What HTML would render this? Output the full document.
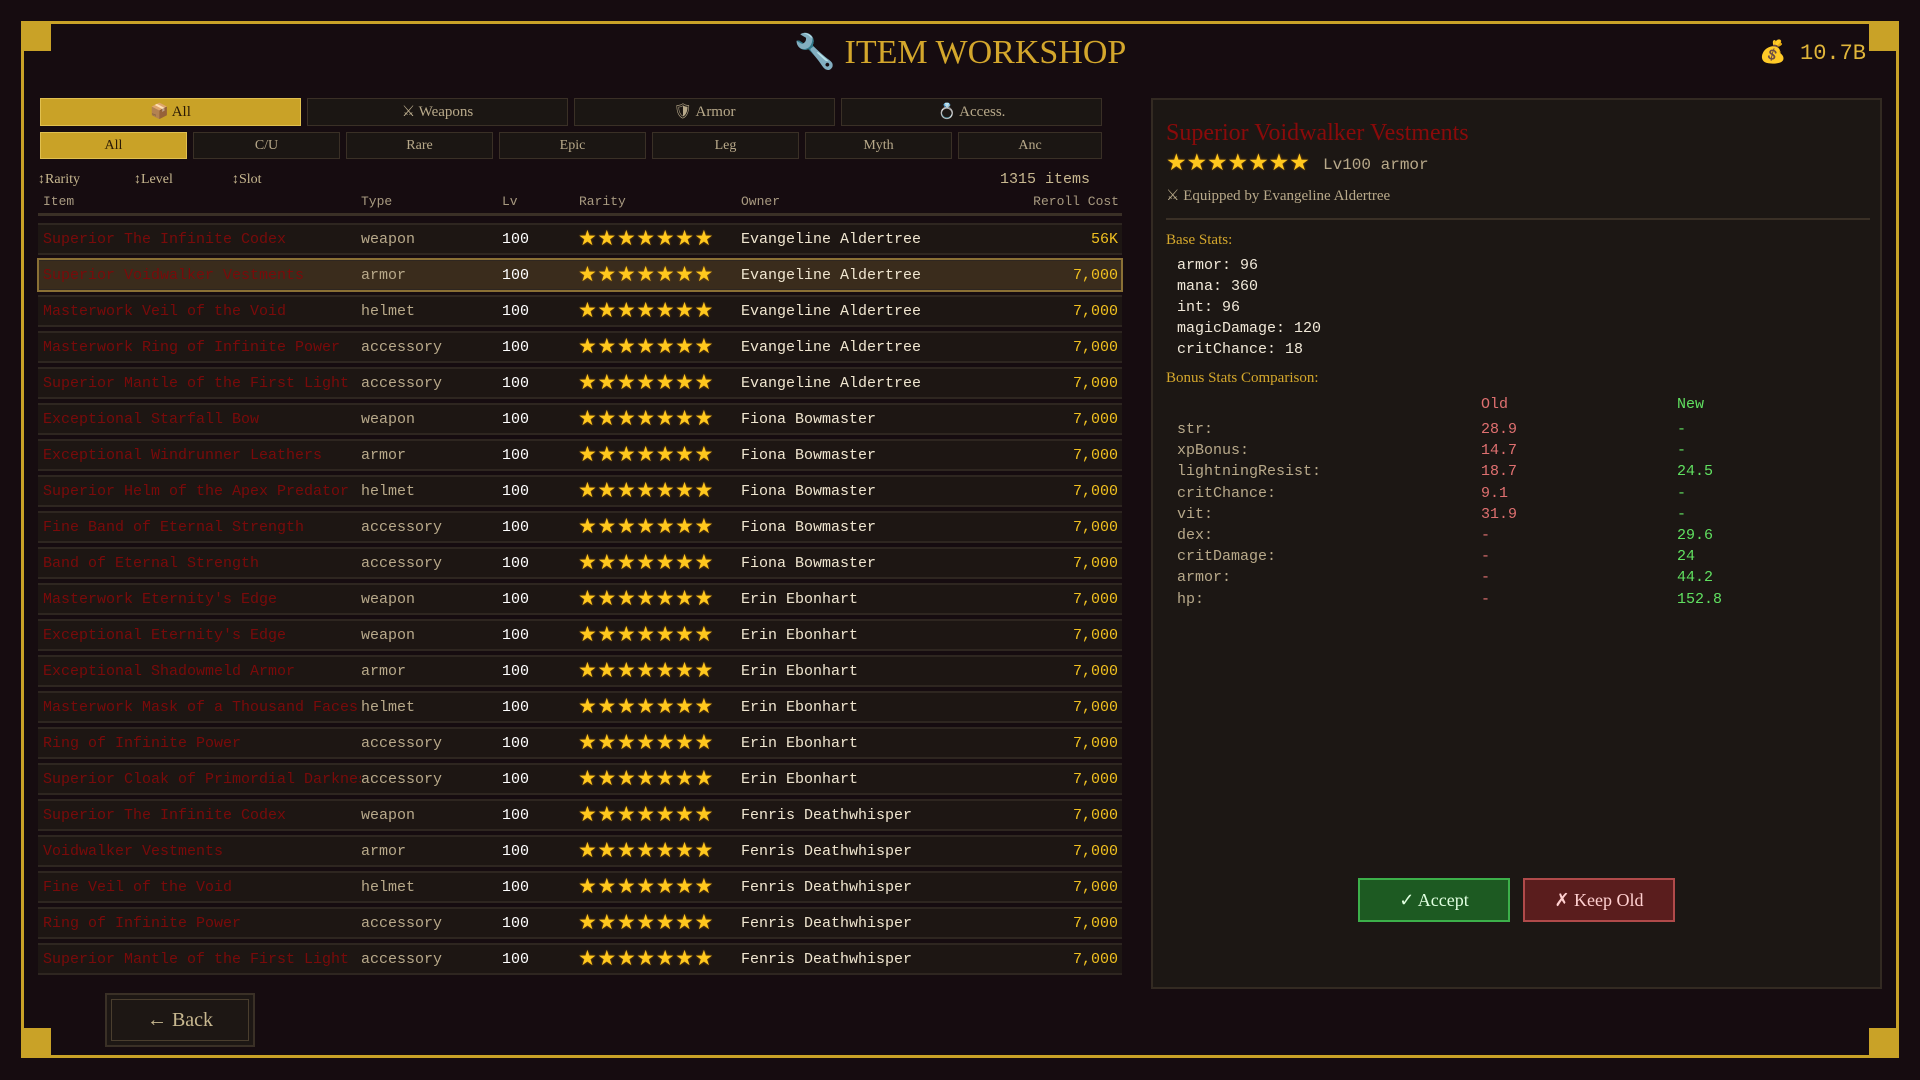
<!DOCTYPE html>
<html><head><meta charset="utf-8"><style>
*{margin:0;padding:0;box-sizing:border-box}
body{width:1920px;height:1080px;background:#160c10;position:relative;overflow:hidden;font-family:"Liberation Mono",monospace;color:#e8dcc0}
.abs{position:absolute}
.frame{left:21px;top:21px;width:1878px;height:1037px;border:3px solid #c9a227}
.corner{width:30px;height:30px;background:#c9a227}
.title{left:0;width:1920px;top:32px;text-align:center;font:34px "Liberation Serif",serif;color:#d4a72c}
.gold{right:54px;top:40px;font-size:22px;color:#e0b53a}
.tab{height:28px;border:1px solid #3a3026;background:#1b1613;color:#b8a98a;font:15px "Liberation Serif",serif;text-align:center;line-height:26px}
.tab.on{background:#c9a227;color:#2a1a05;border-color:#e0c050}
.rt{height:27px;line-height:25px;font-size:14px}
.sort{top:172px;font:14px "Liberation Serif",serif;color:#c8b890}
.hdr{top:194px;font-size:13px;color:#a89a80}
.row{left:38px;width:1084px;height:32px;background:#1d1613;border-top:2px solid #2e2620;border-bottom:2px solid #2e2620;font-size:15px}
.row.sel{background:#3a2c1c;outline:2px solid #8a7035;outline-offset:-1px}
.row span{position:absolute;top:6px;white-space:nowrap}
.nm{left:5px;width:318px;overflow:hidden;color:#7a0a0a}
.ty{left:323px;color:#b8a98a}
.lv{left:464px;color:#fff}
.st{left:540px;top:1px!important;font:21px "DejaVu Sans",sans-serif;color:#ffc81e;letter-spacing:0.6px;text-shadow:0 0 2px #a06000}
.ow{left:703px;color:#f0e6d0}
.co{right:4px;color:#f0c020}
.panel{left:1151px;top:98px;width:731px;height:891px;background:#1c1714;border:2px solid #332a22}
.p{position:absolute;white-space:nowrap}
.lab{font:15px "Liberation Serif",serif;color:#d4a72c}
.bs{font-size:15px;color:#f0e8d8}
.bk{color:#b8a98a;font-size:15px}
.old{color:#e07070;font-size:15px}
.new{color:#60e060;font-size:15px}
</style></head><body>
<div class="abs frame"></div>
<div class="abs corner" style="left:21px;top:21px"></div>
<div class="abs corner" style="left:1869px;top:21px"></div>
<div class="abs corner" style="left:21px;top:1028px"></div>
<div class="abs corner" style="left:1869px;top:1028px"></div>
<div class="abs title">🔧 ITEM WORKSHOP</div>
<div class="abs gold">💰 10.7B</div>

<div class="abs tab on" style="left:40px;top:98px;width:261px">📦 All</div>
<div class="abs tab" style="left:307px;top:98px;width:261px">⚔ Weapons</div>
<div class="abs tab" style="left:574px;top:98px;width:261px">🛡 Armor</div>
<div class="abs tab" style="left:841px;top:98px;width:261px">💍 Access.</div>

<div class="abs tab rt on" style="left:40px;top:132px;width:147px">All</div>
<div class="abs tab rt" style="left:193px;top:132px;width:147px">C/U</div>
<div class="abs tab rt" style="left:346px;top:132px;width:147px">Rare</div>
<div class="abs tab rt" style="left:499px;top:132px;width:147px">Epic</div>
<div class="abs tab rt" style="left:652px;top:132px;width:147px">Leg</div>
<div class="abs tab rt" style="left:805px;top:132px;width:147px">Myth</div>
<div class="abs tab rt" style="left:958px;top:132px;width:144px">Anc</div>

<div class="abs sort" style="left:38px">↕Rarity</div>
<div class="abs sort" style="left:134px">↕Level</div>
<div class="abs sort" style="left:232px">↕Slot</div>
<div class="abs" style="right:830px;top:171px;font-size:15px;color:#c8b890">1315 items</div>
<div class="abs hdr" style="left:43px">Item</div>
<div class="abs hdr" style="left:361px">Type</div>
<div class="abs hdr" style="left:502px">Lv</div>
<div class="abs hdr" style="left:579px">Rarity</div>
<div class="abs hdr" style="left:741px">Owner</div>
<div class="abs hdr" style="right:801px">Reroll Cost</div>
<div class="abs" style="left:38px;top:213px;width:1084px;height:3px;background:#3a3026"></div>

<div id="rows"></div>
<script>
var d=[["Superior The Infinite Codex","weapon","Evangeline Aldertree","56K"],["Superior Voidwalker Vestments","armor","Evangeline Aldertree"],["Masterwork Veil of the Void","helmet","Evangeline Aldertree"],["Masterwork Ring of Infinite Power","accessory","Evangeline Aldertree"],["Superior Mantle of the First Light","accessory","Evangeline Aldertree"],["Exceptional Starfall Bow","weapon","Fiona Bowmaster"],["Exceptional Windrunner Leathers","armor","Fiona Bowmaster"],["Superior Helm of the Apex Predator","helmet","Fiona Bowmaster"],["Fine Band of Eternal Strength","accessory","Fiona Bowmaster"],["Band of Eternal Strength","accessory","Fiona Bowmaster"],["Masterwork Eternity's Edge","weapon","Erin Ebonhart"],["Exceptional Eternity's Edge","weapon","Erin Ebonhart"],["Exceptional Shadowmeld Armor","armor","Erin Ebonhart"],["Masterwork Mask of a Thousand Faces","helmet","Erin Ebonhart"],["Ring of Infinite Power","accessory","Erin Ebonhart"],["Superior Cloak of Primordial Darkness","accessory","Erin Ebonhart"],["Superior The Infinite Codex","weapon","Fenris Deathwhisper"],["Voidwalker Vestments","armor","Fenris Deathwhisper"],["Fine Veil of the Void","helmet","Fenris Deathwhisper"],["Ring of Infinite Power","accessory","Fenris Deathwhisper"],["Superior Mantle of the First Light","accessory","Fenris Deathwhisper"]];
var h="";for(var i=0;i<d.length;i++){var r=d[i];h+='<div class="abs row'+(i==1?' sel':'')+'" style="top:'+(223+i*36)+'px"><span class="nm">'+r[0]+'</span><span class="ty">'+r[1]+'</span><span class="lv">100</span><span class="st">★★★★★★★</span><span class="ow">'+r[2]+'</span><span class="co">'+(r[3]||"7,000")+'</span></div>';}
document.getElementById("rows").innerHTML=h;
</script>

<div class="abs" style="left:105px;top:993px;width:150px;height:54px;background:#1d1714;border:2px solid #3a3026;box-shadow:inset 0 0 0 4px #1d1714,inset 0 0 0 5px #4a3e2e;text-align:center;font:20px 'Liberation Serif',serif;line-height:50px;color:#c8b890">← Back</div>

<div class="abs panel">
<div class="p" style="left:13px;top:20px;font:24px 'Liberation Serif',serif;color:#8a0a0a">Superior Voidwalker Vestments</div>
<div class="p" style="left:13px;top:50px;font:23px 'DejaVu Sans',sans-serif;color:#ffc81e;letter-spacing:-0.1px;text-shadow:0 0 2px #a06000">★★★★★★★</div>
<div class="p" style="left:170px;top:56px;font-size:16px;color:#b8a98a">Lv100 armor</div>
<div class="p" style="left:13px;top:86px;font:15px 'Liberation Serif',serif;color:#b8a98a">⚔ Equipped by Evangeline Aldertree</div>
<div class="p" style="left:13px;top:118px;width:704px;height:2px;background:#3a3026"></div>
<div class="p lab" style="left:13px;top:132px">Base Stats:</div>
<div class="p bs" style="left:24px;top:155px;line-height:21px">armor: 96<br>mana: 360<br>int: 96<br>magicDamage: 120<br>critChance: 18</div>
<div class="p lab" style="left:13px;top:270px">Bonus Stats Comparison:</div>
<div class="p old" style="left:328px;top:296px">Old</div>
<div class="p new" style="left:524px;top:296px">New</div>
<div class="p bk" style="left:24px;top:319px;line-height:21.2px">str:<br>xpBonus:<br>lightningResist:<br>critChance:<br>vit:<br>dex:<br>critDamage:<br>armor:<br>hp:</div>
<div class="p old" style="left:328px;top:319px;line-height:21.2px">28.9<br>14.7<br>18.7<br>9.1<br>31.9<br>-<br>-<br>-<br>-</div>
<div class="p new" style="left:524px;top:319px;line-height:21.2px">-<br>-<br>24.5<br>-<br>-<br>29.6<br>24<br>44.2<br>152.8</div>
<div class="p" style="left:205px;top:778px;width:152px;height:44px;background:#1d5a22;border:2px solid #3cb04a;color:#e0ffe0;font:18px 'Liberation Serif',serif;text-align:center;line-height:40px">✓ Accept</div>
<div class="p" style="left:370px;top:778px;width:152px;height:44px;background:#5a1d1d;border:2px solid #b04a4a;color:#ffd0d0;font:18px 'Liberation Serif',serif;text-align:center;line-height:40px">✗ Keep Old</div>
</div>
</body></html>
